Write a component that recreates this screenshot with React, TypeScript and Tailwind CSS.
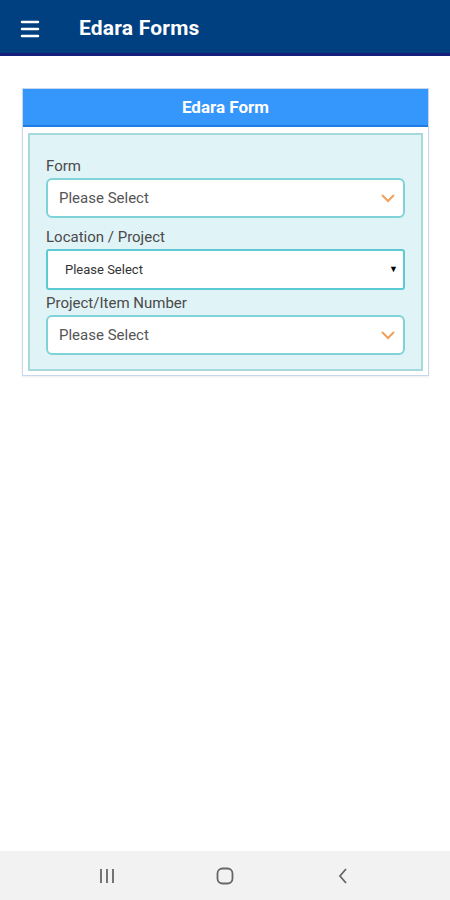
import { Menu } from "lucide-react";

const font = { fontFamily: "Roboto, 'Liberation Sans', sans-serif" };

const Chevron = () => (
  <svg width="14" height="9" viewBox="0 0 14 9" fill="none" className="shrink-0">
    <path d="M1.5 1.5 L7 7 L12.5 1.5" stroke="#f0a05a" strokeWidth="2" strokeLinecap="round" />
  </svg>
);

const Field = ({ label, native }: { label: string; native?: boolean }) => (
  <div className="flex flex-col">
    <span className="text-[15px] leading-[20px] text-[#4a4a4a] mb-[2px]">{label}</span>
    {native ? (
      <div className="h-[41px] bg-white border-2 border-[#5ccad3] rounded-[3px] flex items-center justify-between pl-[17px] pr-[5px]">
        <span className="text-[13px] text-[#333]">Please Select</span>
        <span className="text-[9px] text-black leading-none">▼</span>
      </div>
    ) : (
      <div className="h-[40px] bg-white border-2 border-[#7fd3d8] rounded-[6px] flex items-center justify-between pl-[11px] pr-[8px]">
        <span className="text-[15px] text-[#555]">Please Select</span>
        <Chevron />
      </div>
    )}
  </div>
);

export default function App() {
  return (
    <div className="w-[450px] h-[900px] bg-white flex flex-col" style={font}>
      {/* App bar */}
      <header className="h-[56px] bg-[#003f80] border-b-[3px] border-[#12207a] flex items-center pt-[4px] px-[18px] gap-[37px] shrink-0">
        <Menu size={24} color="#ffffff" strokeWidth={2.5} />
        <h1 className="text-white text-[21px] font-bold tracking-[0.2px]">Edara Forms</h1>
      </header>

      {/* Main content */}
      <main className="flex-1 pt-[32px] px-[22px]">
        <div className="w-[407px] border border-[#c7d7f0] bg-white shadow-[0_1px_2px_rgba(0,0,0,0.08)]">
          <div className="h-[38px] bg-[#3596fb] border-b-2 border-[#1f7ee6] flex items-center justify-center pt-[2px]">
            <span className="text-white text-[17px] font-bold">Edara Form</span>
          </div>
          <div className="mx-[5px] mt-[6px] mb-[4px] bg-[#e0f3f6] border-2 border-[#a5d9dc] pt-[21px] pb-[14px] px-[16px] flex flex-col gap-[3px]">
            <Field label="Form" />
            <div className="h-[3px]" />
            <Field label="Location / Project" native />
            <Field label="Project/Item Number" />
          </div>
        </div>
      </main>

      {/* System nav bar */}
      <nav className="h-[49px] bg-[#f2f2f2] flex items-center justify-between px-[87px] shrink-0">
        <div className="w-[40px] flex justify-center">
          <svg width="20" height="18" viewBox="0 0 20 18">
            <path d="M4 2 V16 M10 2 V16 M16 2 V16" stroke="#666" strokeWidth="1.8" />
          </svg>
        </div>
        <div className="w-[40px] flex justify-center">
          <svg width="20" height="20" viewBox="0 0 20 20">
            <rect x="2.5" y="2.5" width="15" height="15" rx="5" fill="none" stroke="#666" strokeWidth="1.8" />
          </svg>
        </div>
        <div className="w-[40px] flex justify-center">
          <svg width="16" height="20" viewBox="0 0 16 20">
            <path d="M11 3 L5 10 L11 17" fill="none" stroke="#666" strokeWidth="1.8" />
          </svg>
        </div>
      </nav>
    </div>
  );
}
